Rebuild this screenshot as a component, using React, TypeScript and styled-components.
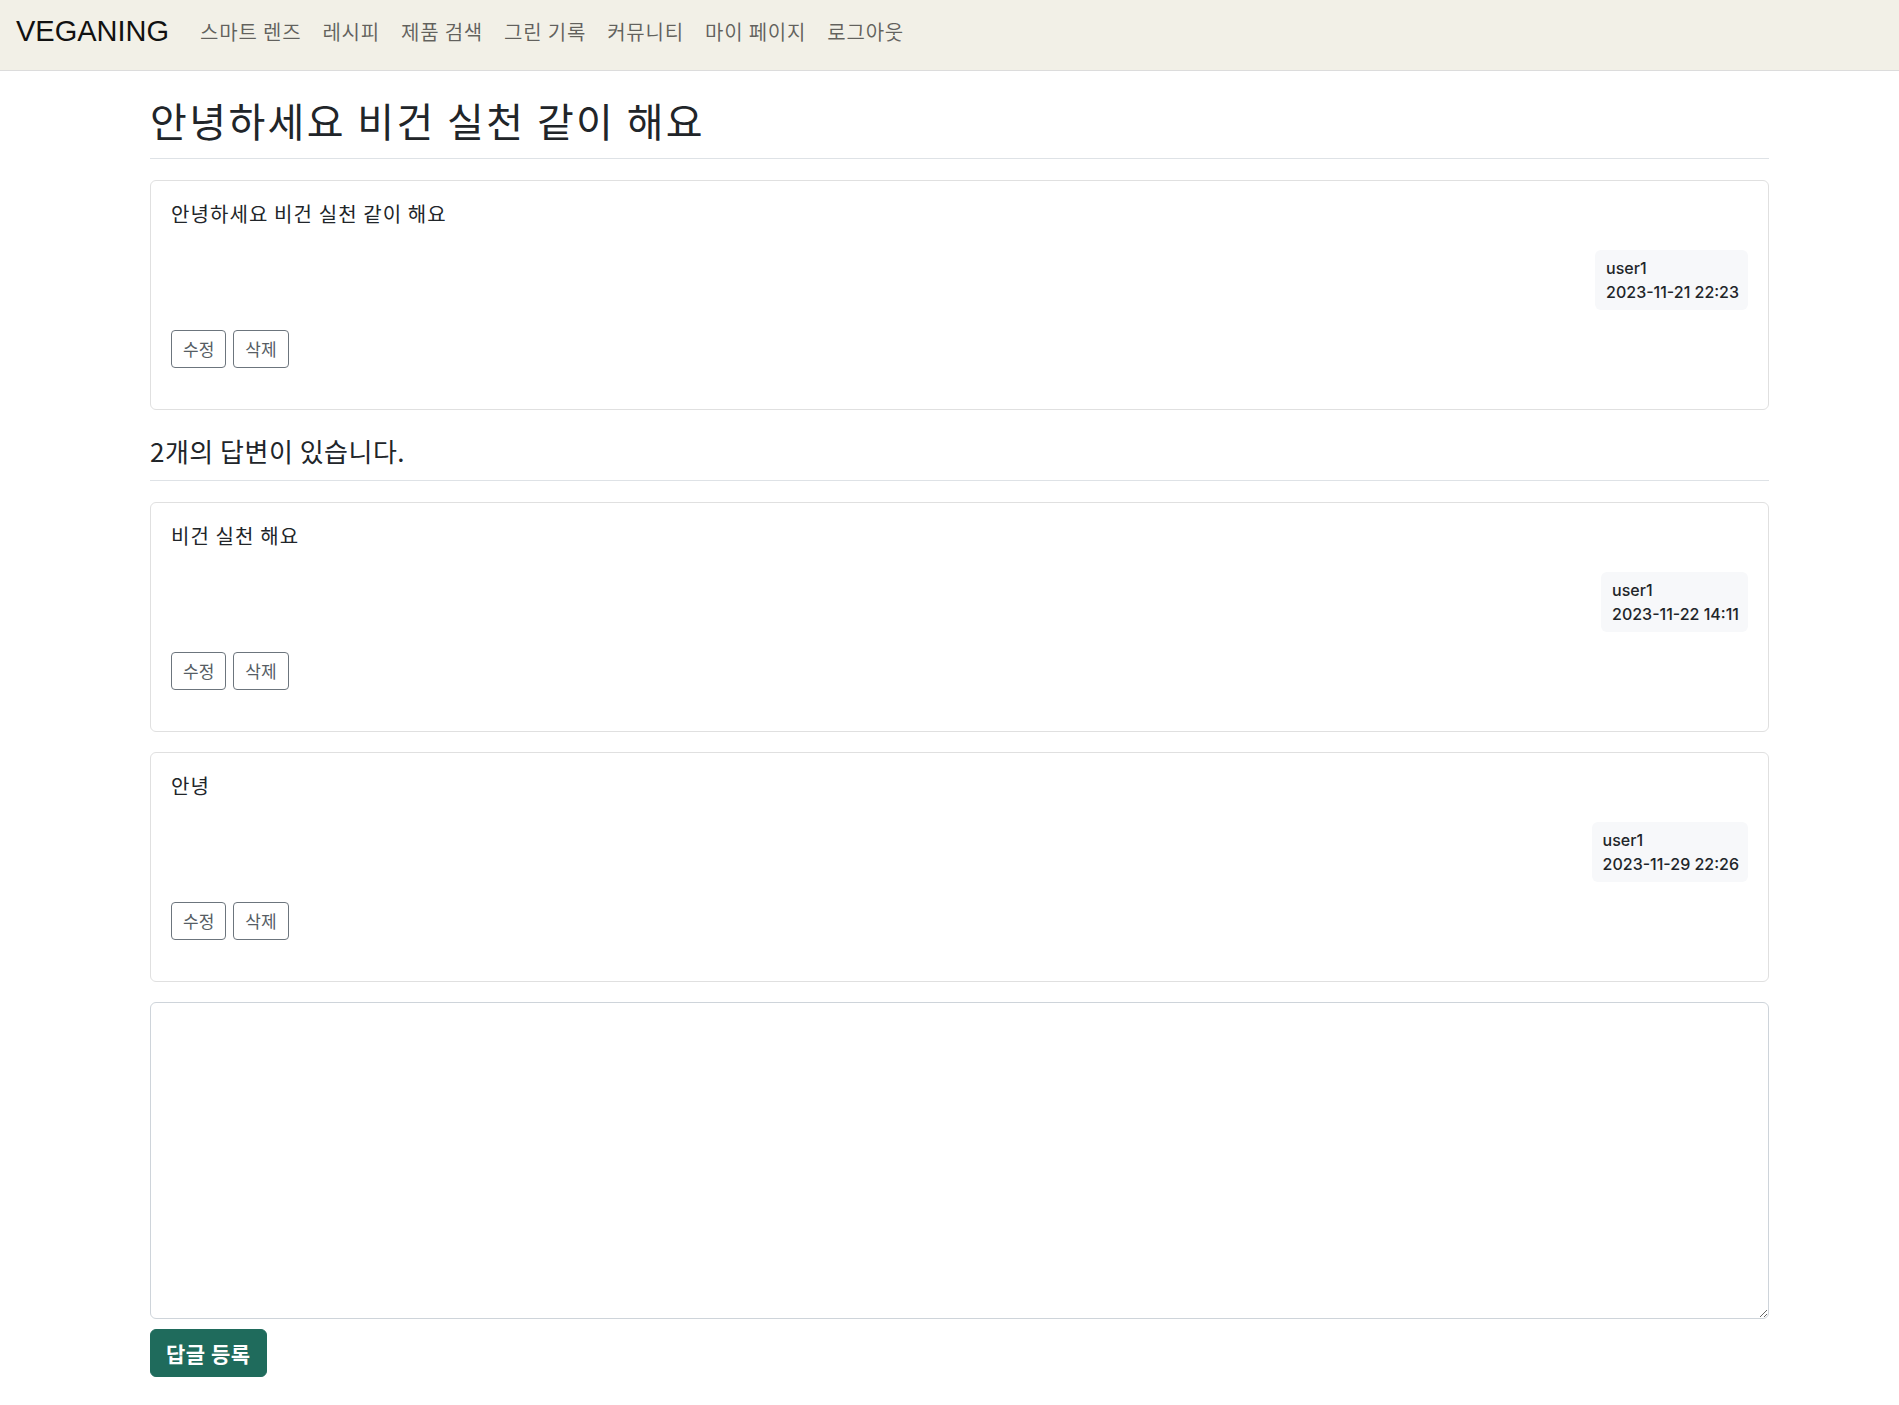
import React from "react";
import styled, { createGlobalStyle } from "styled-components";

const GlobalStyle = createGlobalStyle`
  * { box-sizing: border-box; }
  body {
    margin: 0;
    background: #ffffff;
    color: #212529;
    font-family: "Noto Sans CJK KR", "Noto Sans", sans-serif;
  }
`;

const NavBar = styled.nav`
  height: 71px;
  background: #f2f0e7;
  border-bottom: 1px solid #dcdcdc;
  display: flex;
  align-items: center;
  padding: 0 0 7px 16px;
`;

const Brand = styled.a`
  font-family: "Liberation Sans", Arial, sans-serif;
  font-size: 29px;
  color: #111111;
  text-decoration: none;
  margin-right: 31px;
`;

const NavLinks = styled.div`
  display: flex;
  gap: 21px;
`;

const NavLink = styled.a`
  font-size: 20px;
  color: rgba(0, 0, 0, 0.6);
  text-decoration: none;
  letter-spacing: 0.8px;
`;

const Main = styled.main`
  padding: 0 130px 40px 150px;
`;

const Title = styled.h2`
  margin: 25px 0 21px;
  padding-bottom: 14px;
  font-size: 40px;
  font-weight: 400;
  line-height: 1.2;
  letter-spacing: 2.4px;
  border-bottom: 1px solid #dee2e6;
`;

const Card = styled.section`
  border: 1px solid #e0e0e0;
  border-radius: 6px;
  padding: 20px;
  margin-bottom: 20px;
  display: flex;
  flex-direction: column;
`;

const CardText = styled.div`
  font-size: 20px;
  line-height: 26px;
  letter-spacing: 1.1px;
  white-space: pre-line;
`;

const Meta = styled.div`
  align-self: flex-end;
  margin-top: 23px;
  background: #f7f8fa;
  border-radius: 6px;
  padding: 6px 9px 6px 11px;
  font-family: Inter, "Noto Sans", sans-serif;
  font-size: 16px;
  font-weight: 500;
  line-height: 24px;
  color: #212529;
`;

const Actions = styled.div`
  display: flex;
  gap: 7px;
  margin: 20px 0 21px;
`;

const OutlineButton = styled.button`
  font-family: "Noto Sans CJK KR", sans-serif;
  font-size: 17px;
  line-height: 26px;
  padding: 5px 11px;
  color: #565d64;
  background: #ffffff;
  border: 1px solid #6c757d;
  border-radius: 4px;
  cursor: pointer;
`;

const AnswerHeading = styled.h5`
  margin: 25px 0 21px;
  padding-bottom: 14px;
  font-size: 26px;
  font-weight: 400;
  line-height: 1.2;
  letter-spacing: 0.5px;
  border-bottom: 1px solid #dee2e6;
`;

const ReplyArea = styled.textarea`
  display: block;
  width: 100%;
  height: 317px;
  border: 1px solid #ced4da;
  border-radius: 6px;
  padding: 8px 12px;
  font-family: "Noto Sans CJK KR", sans-serif;
  font-size: 16px;
  resize: vertical;
`;

const SubmitButton = styled.button`
  margin-top: 10px;
  font-family: "Noto Sans CJK KR", sans-serif;
  font-size: 21px;
  font-weight: 600;
  line-height: 30px;
  letter-spacing: 0.5px;
  padding: 8px 15px;
  color: #ffffff;
  background: #1f6b5c;
  border: 1px solid #1f6b5c;
  border-radius: 6px;
  cursor: pointer;
`;

type Post = { text: string; user: string; date: string };

const question: Post = {
  text: "안녕하세요 비건 실천 같이 해요",
  user: "user1",
  date: "2023-11-21 22:23",
};

const answers: Post[] = [
  { text: "비건 실천 해요", user: "user1", date: "2023-11-22 14:11" },
  { text: "안녕", user: "user1", date: "2023-11-29 22:26" },
];

const PostCard = ({ post }: { post: Post }) => (
  <Card>
    <CardText>{post.text}</CardText>
    <Meta>
      <div>{post.user}</div>
      <div>{post.date}</div>
    </Meta>
    <Actions>
      <OutlineButton>수정</OutlineButton>
      <OutlineButton>삭제</OutlineButton>
    </Actions>
  </Card>
);

const navItems = ["스마트 렌즈", "레시피", "제품 검색", "그린 기록", "커뮤니티", "마이 페이지", "로그아웃"];

export default function App() {
  return (
    <>
      <GlobalStyle />
      <NavBar>
        <Brand href="#">VEGANING</Brand>
        <NavLinks>
          {navItems.map((n) => (
            <NavLink key={n} href="#">
              {n}
            </NavLink>
          ))}
        </NavLinks>
      </NavBar>
      <Main>
        <Title>안녕하세요 비건 실천 같이 해요</Title>
        <PostCard post={question} />
        <AnswerHeading>{answers.length}개의 답변이 있습니다.</AnswerHeading>
        {answers.map((a, i) => (
          <PostCard key={i} post={a} />
        ))}
        <ReplyArea />
        <SubmitButton>답글 등록</SubmitButton>
      </Main>
    </>
  );
}
